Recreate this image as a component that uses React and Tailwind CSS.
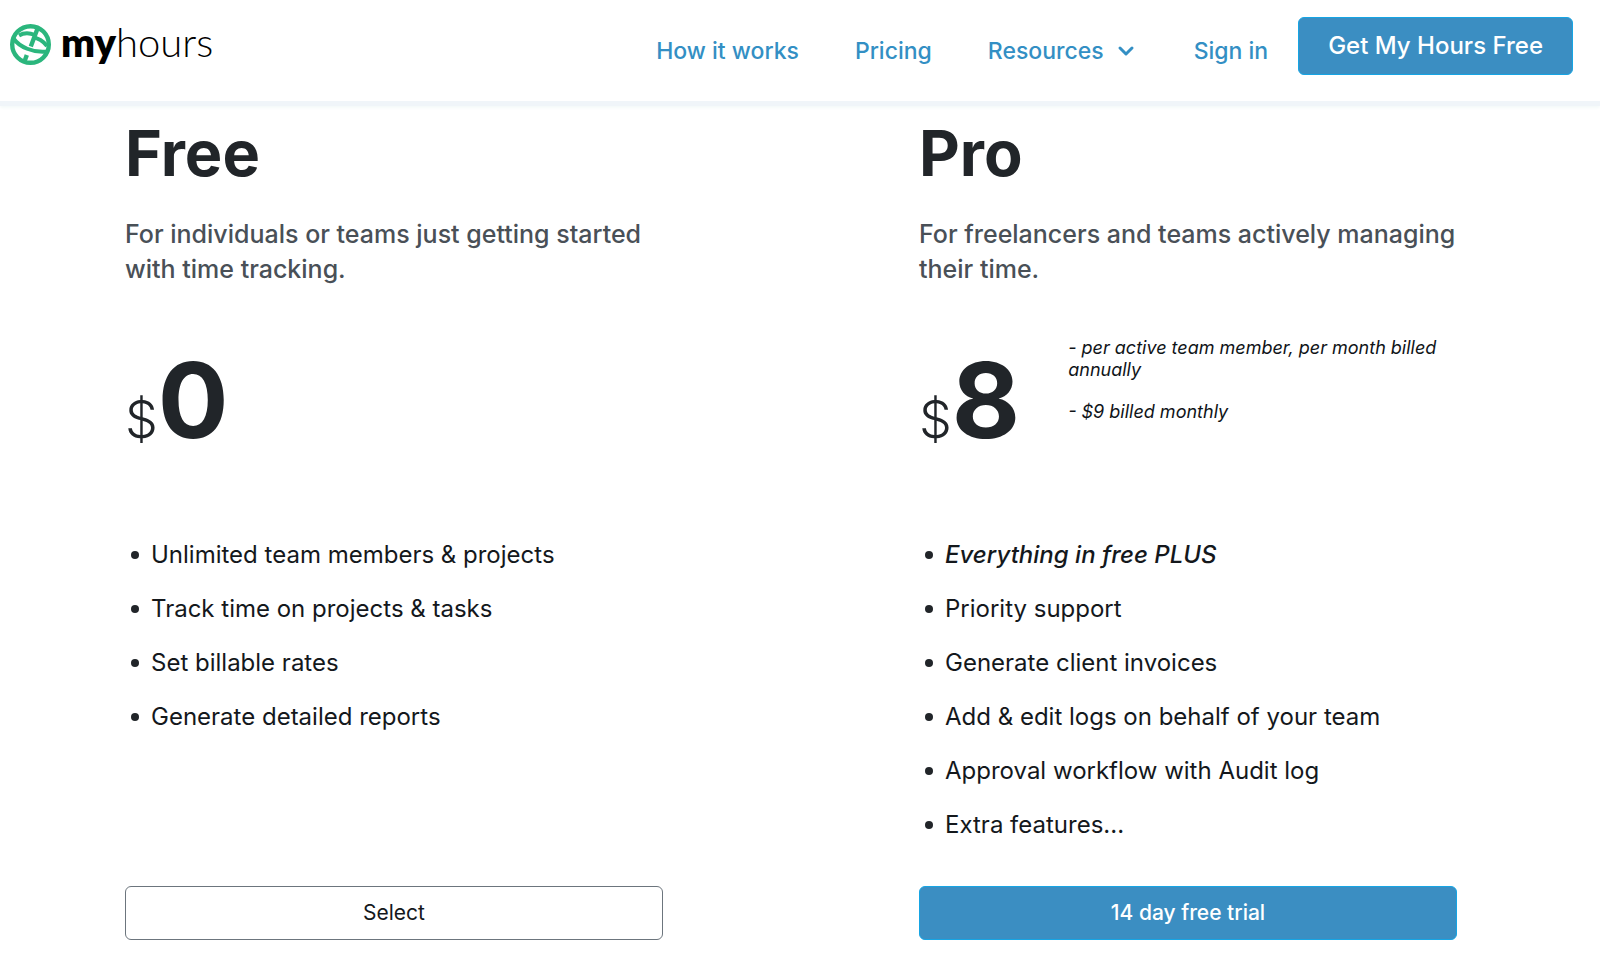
import { ChevronDown } from "lucide-react";

const NAV_LINKS = [
  { label: "How it works", href: "#how-it-works" },
  { label: "Pricing", href: "#pricing" },
];

const PLANS = [
  {
    id: "free",
    name: "Free",
    description: "For individuals or teams just getting started with time tracking.",
    price: 0,
    notes: [],
    features: [
      { text: "Unlimited team members & projects" },
      { text: "Track time on projects & tasks" },
      { text: "Set billable rates" },
      { text: "Generate detailed reports" },
    ],
    cta: "Select",
    primary: false,
  },
  {
    id: "pro",
    name: "Pro",
    description: "For freelancers and teams actively managing their time.",
    price: 8,
    notes: ["- per active team member, per month billed annually", "- $9 billed monthly"],
    features: [
      { text: "Everything in free PLUS", highlight: true },
      { text: "Priority support" },
      { text: "Generate client invoices" },
      { text: "Add & edit logs on behalf of your team" },
      { text: "Approval workflow with Audit log" },
      { text: "Extra features..." },
    ],
    cta: "14 day free trial",
    primary: true,
  },
];

function Logo() {
  return (
    <a href="#home" className="flex items-center gap-[10px] text-black">
      <svg width="41" height="41" viewBox="0 0 41 41" fill="none" stroke="#2bb67d" aria-hidden="true">
        <circle cx="20.5" cy="20.5" r="18.3" strokeWidth="4.4" />
        <path d="M3.5 14.5C9 22.5 23 29.5 38 27.5" strokeWidth="4" />
        <path d="M9 11.5C13.5 8.8 19.5 8.8 25 11" strokeWidth="4" />
        <path d="M27.5 4.5L20.8 22.5" strokeWidth="4.4" />
        <path d="M23 13.5C28.5 14 33.5 17.5 37 22" strokeWidth="4" />
        <path d="M16.8 31L14.5 37.5" strokeWidth="4.4" />
      </svg>
      <span className="pb-1 font-[Lato,sans-serif] text-[40px] leading-10">
        <span className="font-extrabold">my</span>
        <span className="font-light">hours</span>
      </span>
    </a>
  );
}

function Header() {
  return (
    <header className="flex items-start justify-between border-b-[5px] border-[#f0f5f9] bg-white pt-[17px] pr-[27px] pb-[26px] pl-[10px] shadow-[0_2px_3px_#f4faf9]">
      <div className="pt-[5px]">
        <Logo />
      </div>
      <div className="flex items-start">
        <nav className="flex items-center gap-14 pt-4 pr-[30px] text-[23px] leading-9 font-medium text-[#338fc4]">
          {NAV_LINKS.map((link) => (
            <a key={link.label} href={link.href}>
              {link.label}
            </a>
          ))}
          <button type="button" className="flex items-center gap-[10px]">
            Resources
            <ChevronDown size={24} strokeWidth={3} />
          </button>
          <a href="#sign-in">Sign in</a>
        </nav>
        <a
          href="#sign-up"
          className="rounded-md border border-[#16a5e4] bg-[#3b8ec2] px-[29px] py-[10px] text-2xl leading-9 font-medium text-white"
        >
          Get My Hours Free
        </a>
      </div>
    </header>
  );
}

function Plan({ plan }) {
  return (
    <section className="flex flex-col">
      <h2 className="text-[63px] leading-[76px] font-bold text-[#212529]">{plan.name}</h2>
      <p className="mt-[26px] text-[25px] leading-[35px] font-medium text-[#495057]">{plan.description}</p>

      {/* Price */}
      <div className="mt-[34px] flex h-[208px] items-start">
        <div className="flex items-baseline pt-[26px] text-[#212529]">
          <span className="text-[52px] leading-none font-light">$</span>
          <span className="text-[105px] leading-none font-bold">{plan.price}</span>
        </div>
        {plan.notes.length > 0 && (
          <div className="flex flex-col gap-5 pt-4 pl-12 text-lg leading-[22px] text-[#101418] italic">
            {plan.notes.map((note) => (
              <p key={note}>{note}</p>
            ))}
          </div>
        )}
      </div>

      <ul className="mb-[43px] flex flex-col gap-[18px] pt-2 text-2xl leading-9 text-[#14181c]">
        {plan.features.map((f) => (
          <li key={f.text} className="flex items-center gap-3 pl-[6px]">
            <span className="size-2 shrink-0 rounded-full bg-[#212529]" />
            <span className={f.highlight ? "font-medium italic" : ""}>{f.text}</span>
          </li>
        ))}
      </ul>

      <button
        type="button"
        className={`mt-auto rounded-md border py-2 text-[21px] leading-9 ${
          plan.primary
            ? "border-[#16a5e4] bg-[#3b8ec2] font-medium text-white"
            : "border-[#6c757d] bg-white text-[#14181c]"
        }`}
      >
        {plan.cta}
      </button>
    </section>
  );
}

export default function App() {
  return (
    <div className="min-h-screen bg-white font-[Inter,sans-serif]">
      <Header />
      <main className="grid grid-cols-2 gap-64 pt-[9px] pr-[143px] pb-7 pl-[125px]">
        {PLANS.map((plan) => (
          <Plan key={plan.id} plan={plan} />
        ))}
      </main>
    </div>
  );
}
